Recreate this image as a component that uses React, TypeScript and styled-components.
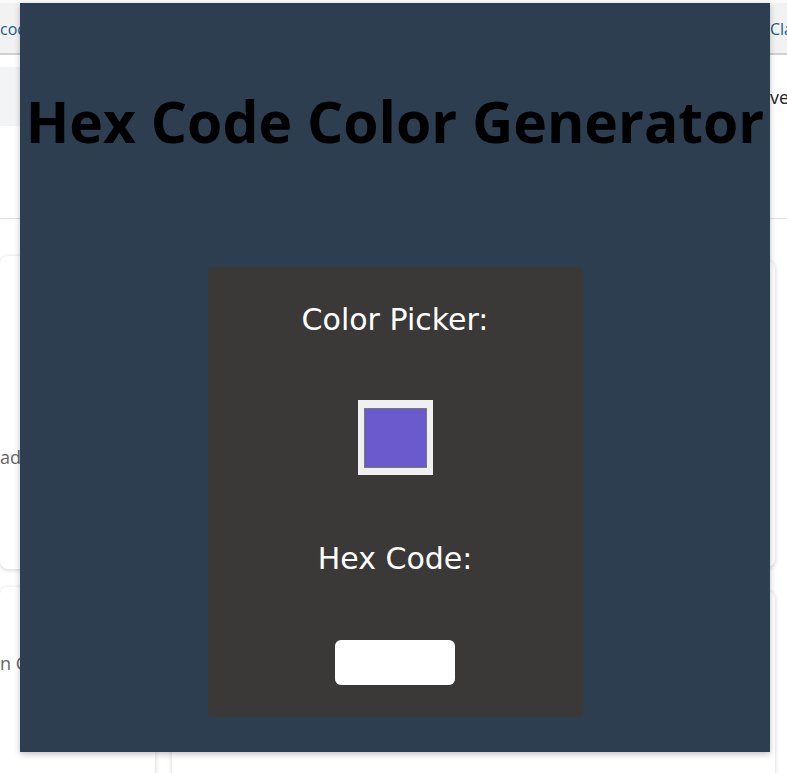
import styled, { createGlobalStyle } from "styled-components";

const GlobalStyle = createGlobalStyle`
  html, body {
    margin: 0;
    padding: 0;
    background: #ffffff;
    overflow: hidden;
  }
  body {
    font-family: "Open Sans", "Noto Sans", sans-serif;
  }
`;

// background page, mostly covered by the generator panel
const Page = styled.div`
  position: relative;
  width: 787px;
  height: 773px;
  overflow: hidden;
`;

const TopBar = styled.div`
  height: 55px;
  background: #f2f2f2;
  border-top: 3px solid #fafafa;
  border-bottom: 2px solid #cfcfcf;
  box-sizing: border-box;
  display: flex;
  align-items: center;
  padding-top: 2px;
`;

const Tab = styled.span<{ $end?: boolean }>`
  font-size: 16px;
  color: #1d5b86;
  white-space: nowrap;
  overflow: hidden;
  width: ${(p) => (p.$end ? "17px" : "auto")};
  margin-left: ${(p) => (p.$end ? "auto" : "0")};
`;

const Header = styled.div`
  height: 164px;
  border-bottom: 1px solid #e2e2e2;
  padding-top: 12px;
  box-sizing: border-box;
  display: flex;
  justify-content: space-between;
`;

const SearchBand = styled.div`
  width: 40px;
  height: 59px;
  background: #f3f4f6;
`;

const HeaderText = styled.span`
  width: 17px;
  overflow: hidden;
  white-space: nowrap;
  font-size: 18px;
  color: #222;
  margin-top: 18px;
`;

const Content = styled.div`
  display: grid;
  grid-template-columns: 155px 603px;
  column-gap: 17px;
  padding-top: 37px;
`;

const Column = styled.div<{ $gap: number; $offset: number }>`
  display: flex;
  flex-direction: column;
  gap: ${(p) => p.$gap}px;
  padding-top: ${(p) => p.$offset}px;
`;

const Card = styled.div<{ $height: number; $textTop?: number }>`
  height: ${(p) => p.$height}px;
  box-sizing: border-box;
  padding-top: ${(p) => p.$textTop ?? 0}px;
  background: #fff;
  border-radius: 8px;
  box-shadow: 0 1px 5px rgba(0, 0, 0, 0.18);
  font-size: 18px;
  line-height: 24px;
  color: #666;
  white-space: nowrap;
`;

// generator overlay
const Panel = styled.div`
  position: absolute;
  left: 20px;
  top: 3px;
  width: 750px;
  height: 749px;
  background: #2c3e50;
  box-shadow: 0 2px 6px rgba(0, 0, 0, 0.25);
  display: flex;
  flex-direction: column;
  align-items: center;
`;

const Title = styled.h1`
  margin: 78px 0 0;
  font-family: "Open Sans", "Noto Sans", sans-serif;
  font-weight: 700;
  font-size: 57px;
  line-height: 80px;
  color: #000;
  white-space: nowrap;
`;

const PickerBox = styled.div`
  margin-top: 106px;
  width: 375px;
  box-sizing: border-box;
  padding: 35px 0 32px;
  background: #3a3937;
  border-radius: 5px;
  display: flex;
  flex-direction: column;
  align-items: center;
`;

const Label = styled.h2<{ $after: number }>`
  margin: 0 0 ${(p) => p.$after}px;
  font-family: "DejaVu Sans", Verdana, sans-serif;
  font-weight: 400;
  font-size: 30px;
  line-height: 35px;
  color: #fff;
`;

const ColorInput = styled.input`
  width: 75px;
  height: 75px;
  margin: 0 0 66px;
  padding: 0;
  border: none;
  background: #f0f0f0;
  cursor: pointer;
  -webkit-appearance: none;
  appearance: none;

  &::-webkit-color-swatch-wrapper {
    padding: 8px 6px 7px;
  }

  &::-webkit-color-swatch {
    border: 1px solid #777;
    border-radius: 0;
  }
`;

const HexOutput = styled.div`
  width: 120px;
  height: 45px;
  background: #fff;
  border-radius: 6px;
`;

const App = () => {
  return (
    <>
      <GlobalStyle />
      <Page>
        <TopBar>
          <Tab>code</Tab>
          <Tab $end>Class</Tab>
        </TopBar>
        <Header>
          <SearchBand />
          <HeaderText>vel</HeaderText>
        </Header>
        <Content>
          <Column $gap={18} $offset={0}>
            <Card $height={313} $textTop={189}>ad</Card>
            <Card $height={200} $textTop={64}>n C</Card>
          </Column>
          <Column $gap={24} $offset={5}>
            <Card $height={306} />
            <Card $height={200} />
          </Column>
        </Content>
        <Panel>
          <Title>Hex Code Color Generator</Title>
          <PickerBox>
            <Label $after={63}>Color Picker:</Label>
            <ColorInput type="color" defaultValue="#6a5acd" />
            <Label $after={64}>Hex Code:</Label>
            <HexOutput />
          </PickerBox>
        </Panel>
      </Page>
    </>
  );
};

export default App;
